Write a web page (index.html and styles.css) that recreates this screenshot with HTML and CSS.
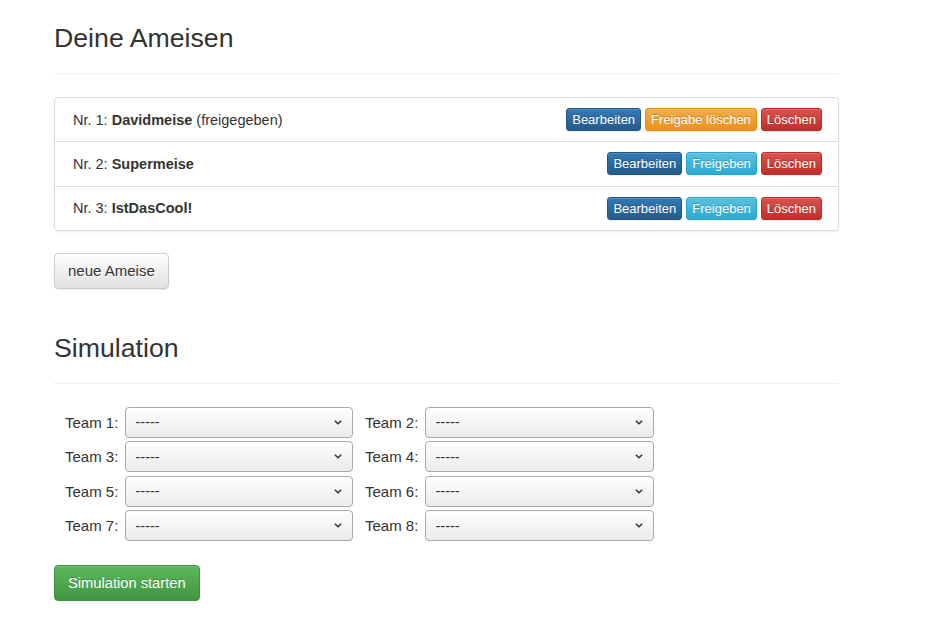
FILE: index.html
```html
<!DOCTYPE html>
<html lang="de">
<head>
<meta charset="utf-8">
<title>Deine Ameisen</title>
<link rel="stylesheet" href="styles.css">
</head>
<body>
<div class="page">
  <div class="page-header"><h3>Deine Ameisen</h3></div>
  <div class="list">
    <div class="item">
      <span class="name">Nr. 1: <b>Davidmeise</b> (freigegeben)</span>
      <div class="actions">
        <button class="btn btn-xs btn-primary">Bearbeiten</button>
        <button class="btn btn-xs btn-warning">Freigabe löschen</button>
        <button class="btn btn-xs btn-danger">Löschen</button>
      </div>
    </div>
    <div class="item">
      <span class="name">Nr. 2: <b>Supermeise</b></span>
      <div class="actions">
        <button class="btn btn-xs btn-primary">Bearbeiten</button>
        <button class="btn btn-xs btn-info">Freigeben</button>
        <button class="btn btn-xs btn-danger">Löschen</button>
      </div>
    </div>
    <div class="item">
      <span class="name">Nr. 3: <b>IstDasCool!</b></span>
      <div class="actions">
        <button class="btn btn-xs btn-primary">Bearbeiten</button>
        <button class="btn btn-xs btn-info">Freigeben</button>
        <button class="btn btn-xs btn-danger">Löschen</button>
      </div>
    </div>
  </div>
  <button class="btn btn-default btn-new">neue Ameise</button>

  <div class="page-header second"><h3>Simulation</h3></div>
  <form class="teams">
    <div class="field"><label>Team 1:</label><span class="sel"><select><option>-----</option></select><svg class="chev" width="8" height="5" viewBox="0 0 8 5"><path d="M0.8 0.8 L4 3.8 L7.2 0.8" fill="none" stroke="#333" stroke-width="1.5"/></svg></span></div>
    <div class="field"><label>Team 2:</label><span class="sel wide"><select><option>-----</option></select><svg class="chev" width="8" height="5" viewBox="0 0 8 5"><path d="M0.8 0.8 L4 3.8 L7.2 0.8" fill="none" stroke="#333" stroke-width="1.5"/></svg></span></div>
    <div class="field"><label>Team 3:</label><span class="sel"><select><option>-----</option></select><svg class="chev" width="8" height="5" viewBox="0 0 8 5"><path d="M0.8 0.8 L4 3.8 L7.2 0.8" fill="none" stroke="#333" stroke-width="1.5"/></svg></span></div>
    <div class="field"><label>Team 4:</label><span class="sel wide"><select><option>-----</option></select><svg class="chev" width="8" height="5" viewBox="0 0 8 5"><path d="M0.8 0.8 L4 3.8 L7.2 0.8" fill="none" stroke="#333" stroke-width="1.5"/></svg></span></div>
    <div class="field"><label>Team 5:</label><span class="sel"><select><option>-----</option></select><svg class="chev" width="8" height="5" viewBox="0 0 8 5"><path d="M0.8 0.8 L4 3.8 L7.2 0.8" fill="none" stroke="#333" stroke-width="1.5"/></svg></span></div>
    <div class="field"><label>Team 6:</label><span class="sel wide"><select><option>-----</option></select><svg class="chev" width="8" height="5" viewBox="0 0 8 5"><path d="M0.8 0.8 L4 3.8 L7.2 0.8" fill="none" stroke="#333" stroke-width="1.5"/></svg></span></div>
    <div class="field"><label>Team 7:</label><span class="sel"><select><option>-----</option></select><svg class="chev" width="8" height="5" viewBox="0 0 8 5"><path d="M0.8 0.8 L4 3.8 L7.2 0.8" fill="none" stroke="#333" stroke-width="1.5"/></svg></span></div>
    <div class="field"><label>Team 8:</label><span class="sel wide"><select><option>-----</option></select><svg class="chev" width="8" height="5" viewBox="0 0 8 5"><path d="M0.8 0.8 L4 3.8 L7.2 0.8" fill="none" stroke="#333" stroke-width="1.5"/></svg></span></div>
  </form>
  <button class="btn btn-success btn-start">Simulation starten</button>
</div>
</body>
</html>
```

FILE: styles.css
```css
* { box-sizing: border-box; }
html, body { margin: 0; background: #fff; }
body {
  font-family: "Liberation Sans", Arial, sans-serif;
  font-size: 14.5px;
  color: #333;
}
.page {
  width: 839px;
  padding: 24px 0 0 54px;
}
.page-header {
  padding-bottom: 20px;
  border-bottom: 1px solid #eee;
}
.page-header.second { margin-top: 45px; }
.page-header h3 {
  margin: 0;
  font-size: 26.7px;
  font-weight: 500;
  line-height: 29px;
  color: #333;
}
.list {
  margin-top: 23px;
  border: 1px solid #ddd;
  border-radius: 4px;
  box-shadow: 0 1px 2px rgba(0,0,0,.075);
}
.item {
  height: 43.3px;
  display: flex;
  align-items: center;
  justify-content: space-between;
  padding: 0 16px 0 18px;
}
.item + .item {
  height: 44.3px;
  border-top: 1px solid #ddd;
}
.name b { font-weight: bold; }
.actions { display: flex; gap: 4px; }
.btn {
  font-family: "Liberation Sans", Arial, sans-serif;
  border: 1px solid transparent;
  border-radius: 4px;
  cursor: pointer;
  color: #fff;
  text-shadow: 0 -1px 0 rgba(0,0,0,.2);
  box-shadow: inset 0 1px 0 rgba(255,255,255,.15), 0 1px 1px rgba(0,0,0,.075);
}
.btn-xs {
  font-size: 13px;
  line-height: 19px;
  padding: 1px 5px;
  border-radius: 3px;
}
.btn-primary { background: linear-gradient(#337ab7, #265a88); border-color: #245580; }
.btn-warning { background: linear-gradient(#f0ad4e, #eb9316); border-color: #e38d13; }
.btn-danger { background: linear-gradient(#d9534f, #c12e2a); border-color: #b92c28; }
.btn-info { background: linear-gradient(#5bc0de, #2aabd2); border-color: #28a4c9; }
.btn-default {
  color: #333;
  text-shadow: 0 1px 0 #fff;
  background: linear-gradient(#fff, #e0e0e0);
  border-color: #ccc;
}
.btn-success { background: linear-gradient(#5cb85c, #419641); border-color: #3e8f3e; }
.btn-new, .btn-start {
  font-size: 14.7px;
  line-height: 20px;
  padding: 7px 13px;
}
.btn-new {
  font-size: 15px;
  margin-top: 22px;
  display: block;
}
.btn-start { margin-top: 24px; display: block; }
.teams {
  margin-top: 23px;
  padding-left: 11px;
  display: grid;
  grid-template-columns: auto auto;
  justify-content: start;
  column-gap: 12.5px;
  row-gap: 3.4px;
}
.field {
  display: flex;
  align-items: center;
  gap: 5.5px;
}
.field label {
  white-space: nowrap;
  width: 54px;
  font-size: 15px;
}
.sel {
  position: relative;
  display: block;
  width: 228px;
}
.sel.wide { width: 229px; }
.sel select {
  appearance: none;
  -webkit-appearance: none;
  display: block;
  width: 100%;
  height: 31px;
  margin: 0;
  padding: 0 24px 0 10px;
  font-family: "Liberation Sans", Arial, sans-serif;
  font-size: 14.5px;
  color: #333;
  border: 1px solid #a9a9a9;
  border-radius: 4px;
  background: linear-gradient(#fefefe, #ebebeb);
}
.chev {
  position: absolute;
  right: 11px;
  top: 13px;
  pointer-events: none;
}
```
